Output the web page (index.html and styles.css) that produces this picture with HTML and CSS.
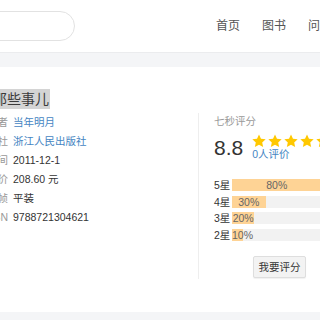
FILE: index.html
```html
<!DOCTYPE html>
<html lang="zh-CN">
<head>
<meta charset="utf-8">
<title>那些事儿</title>
<link rel="stylesheet" href="styles.css">
</head>
<body>
<header class="topbar">
  <div class="search"></div>
  <nav class="nav"><a>首页</a><a>图书</a><a>问答</a></nav>
</header>
<div class="band"></div>
<main class="page">
  <h1 class="title"><span class="title-text">那些事儿</span></h1>
  <div class="detail">
    <dl class="info">
      <dt>作者</dt><dd><a class="link">当年明月</a></dd>
      <dt>出版社</dt><dd><a class="link">浙江人民出版社</a></dd>
      <dt>出版时间</dt><dd>2011-12-1</dd>
      <dt>定价</dt><dd>208.60 元</dd>
      <dt>装帧</dt><dd>平装</dd>
      <dt>ISBN</dt><dd>9788721304621</dd>
    </dl>
    <section class="rating">
      <div class="rating-head">七秒评分</div>
      <div class="score-row">
        <div class="score">8.8</div>
        <div class="score-side">
          <div class="stars">
            <svg class="star" viewBox="0 0 24 24"><path d="M12 0.8l3.4 7.3 8 .9-5.9 5.5 1.6 7.9L12 18.4l-7.1 4 1.6-7.9L0.6 9l8-.9z"/></svg>
            <svg class="star" viewBox="0 0 24 24"><path d="M12 0.8l3.4 7.3 8 .9-5.9 5.5 1.6 7.9L12 18.4l-7.1 4 1.6-7.9L0.6 9l8-.9z"/></svg>
            <svg class="star" viewBox="0 0 24 24"><path d="M12 0.8l3.4 7.3 8 .9-5.9 5.5 1.6 7.9L12 18.4l-7.1 4 1.6-7.9L0.6 9l8-.9z"/></svg>
            <svg class="star" viewBox="0 0 24 24"><path d="M12 0.8l3.4 7.3 8 .9-5.9 5.5 1.6 7.9L12 18.4l-7.1 4 1.6-7.9L0.6 9l8-.9z"/></svg>
            <svg class="star" viewBox="0 0 24 24"><path d="M12 0.8l3.4 7.3 8 .9-5.9 5.5 1.6 7.9L12 18.4l-7.1 4 1.6-7.9L0.6 9l8-.9z"/></svg>
          </div>
          <a class="link count">0人评价</a>
        </div>
      </div>
      <div class="bars">
        <div class="bar-row"><span class="bar-label">5星</span><div class="bar"><div class="fill" style="width:80%">80%</div></div></div>
        <div class="bar-row"><span class="bar-label">4星</span><div class="bar"><div class="fill" style="width:30%">30%</div></div></div>
        <div class="bar-row"><span class="bar-label">3星</span><div class="bar"><div class="fill" style="width:20%">20%</div></div></div>
        <div class="bar-row"><span class="bar-label">2星</span><div class="bar"><div class="fill" style="width:10%">10%</div></div></div>
      </div>
      <button class="rate-btn">我要评分</button>
    </section>
  </div>
</main>
<div class="foot-band"></div>
</body>
</html>
```

FILE: styles.css
```css
* { box-sizing: border-box; }
html, body { margin: 0; padding: 0; overflow: hidden; }
body {
  width: 320px;
  height: 320px;
  background: #f4f5f7;
  font-family: "Liberation Sans", "Noto Sans CJK SC", sans-serif;
  color: #333;
}

.topbar {
  height: 53px;
  background: #fff;
  border-bottom: 1px solid #ebecee;
  display: flex;
  align-items: center;
}
.search {
  flex: none;
  width: 150px;
  height: 30px;
  margin-left: -75px;
  border: 1px solid #e2e2e2;
  border-radius: 15px;
  background: #fff;
}
.nav {
  display: flex;
  gap: 22px;
  margin-left: 141px;
  white-space: nowrap;
  font-size: 12px;
  color: #555;
  line-height: 16px;
}
.nav a { color: #555; }

.band { height: 14px; }

.page {
  height: 245px;
  background: #fff;
  padding-top: 22px;
}
.title {
  margin: 0 0 4px;
  font-size: 14px;
  line-height: 20px;
  font-weight: normal;
  white-space: nowrap;
}
.title-text {
  display: inline-block;
  margin-left: -7px;
  padding: 0 1px 0 0;
  background: #d4d4d4;
  color: #3a3a3a;
}

.detail {
  display: flex;
  align-items: flex-start;
}
.info {
  flex: none;
  width: 260px;
  margin: 0 0 0 -62px;
  display: grid;
  grid-template-columns: 70px 1fr;
  column-gap: 5px;
  font-size: 10.5px;
  line-height: 19px;
}
.info dt {
  text-align: right;
  color: #999;
  white-space: nowrap;
}
.info dd { margin: 0; color: #333; white-space: nowrap; }
.link { color: #4585c2; }

.rating {
  flex: none;
  width: 200px;
  height: 166px;
  border-left: 1px solid #eeeeee;
  padding-left: 15px;
}
.rating-head {
  font-size: 10.5px;
  line-height: 16px;
  color: #999;
}
.score-row {
  display: flex;
  align-items: center;
  margin-top: 5px;
}
.score {
  font-size: 21px;
  line-height: 26px;
  color: #333;
}
.score-side {
  margin-left: 9px;
  display: flex;
  flex-direction: column;
}
.stars {
  display: flex;
  gap: 2px;
  height: 14px;
}
.star { width: 14px; height: 14px; fill: #ffc800; }
.count {
  font-size: 10.5px;
  line-height: 13px;
}

.bars {
  margin-top: 18px;
  display: flex;
  flex-direction: column;
  gap: 4.6px;
}
.bar-row {
  display: flex;
  align-items: center;
  height: 12px;
}
.bar-label {
  width: 18px;
  font-size: 10.5px;
  line-height: 12px;
  color: #333;
}
.bar {
  width: 112px;
  height: 12px;
  background: #f2f2f2;
}
.fill {
  height: 12px;
  background: #fed395;
  font-size: 10.5px;
  line-height: 12px;
  color: #666;
  text-align: center;
  white-space: nowrap;
}

.rate-btn {
  display: block;
  margin: 15px 0 0 39px;
  width: 53px;
  height: 22px;
  padding: 0;
  background: #f3f3f3;
  border: 1px solid #dedede;
  border-radius: 2px;
  box-shadow: 0 1px 1px rgba(0,0,0,0.06);
  font-family: inherit;
  font-size: 10.5px;
  color: #333;
}

.foot-band { height: 8px; }
```
